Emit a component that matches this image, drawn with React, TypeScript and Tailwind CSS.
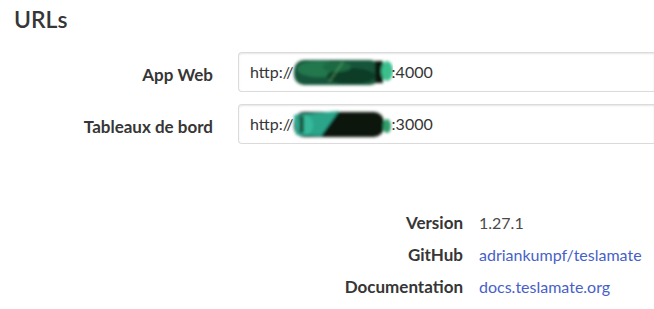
import React from "react";

const font = { fontFamily: '"Lato", "Noto Sans", sans-serif' };

// smudged-out host address
const Smudge = ({ dark }: { dark?: boolean }) => (
  <svg width="102" height="34" viewBox="0 0 102 34" className="inline-block align-middle -ml-[3px] -mr-[1px]">
    <defs>
      <filter id={dark ? "bd" : "bg"} x="-20%" y="-40%" width="140%" height="180%">
        <feGaussianBlur stdDeviation="1.8" />
      </filter>
    </defs>
    {dark ? (
      <g filter="url(#bd)">
        <rect x="3" y="5" width="90" height="25" rx="10" fill="#0c1511" />
        <path d="M3 8 L48 4 L30 29 L5 28 Z" fill="#2aa58a" />
        <ellipse cx="14" cy="18" rx="8" ry="10" fill="#36b99a" />
        <rect x="8" y="9" width="5" height="17" fill="#1f5a45" />
        <ellipse cx="96" cy="19" rx="4" ry="7" fill="#2e9d6a" />
      </g>
    ) : (
      <g filter="url(#bg)">
        <rect x="3" y="5" width="86" height="25" rx="10" fill="#17553a" />
        <ellipse cx="28" cy="14" rx="22" ry="8" fill="#22774d" />
        <ellipse cx="60" cy="21" rx="24" ry="8" fill="#0f3d27" />
        <ellipse cx="46" cy="12" rx="14" ry="5" fill="#1d6a43" />
        <path d="M38 27 L52 7" stroke="#5fae6c" strokeWidth="1" />
        <rect x="84" y="6" width="8" height="22" fill="#0b140f" />
        <ellipse cx="96" cy="16" rx="6" ry="10" fill="#3bbf8c" />
      </g>
    )}
  </svg>
);

const UrlField = ({ label, port, dark }: { label: string; port: string; dark?: boolean }) => (
  <div className="flex items-start">
    <label className="w-[213px] shrink-0 pt-[11px] text-right text-[17px] font-bold leading-6 text-[#363636]">
      {label}
    </label>
    <div className="ml-[25px] flex h-[40px] flex-1 items-center rounded-l-[4px] border border-r-0 border-[#dbdbdb] pl-[11px] text-[16px] text-[#363636] shadow-[inset_0_1px_2px_rgba(10,10,10,0.1)]">
      <span>http://</span>
      <Smudge dark={dark} />
      <span>{port}</span>
    </div>
  </div>
);

const InfoRow = ({ label, children }: { label: string; children: React.ReactNode }) => (
  <div className="flex h-[32px] items-center">
    <div className="w-[463px] shrink-0 text-right text-[17px] font-bold text-[#363636]">{label}</div>
    <div className="ml-[16px] text-[16px] text-[#4a4a4a]">{children}</div>
  </div>
);

export default function App() {
  return (
    <div className="h-[309px] w-[654px] overflow-hidden bg-white" style={font}>
      <h2 className="pl-[14px] pt-[3px] text-[23px] font-semibold leading-8 text-[#363636]">URLs</h2>
      <div className="mt-[17px] flex flex-col gap-[12px]">
        <UrlField label="App Web" port=":4000" />
        <UrlField label="Tableaux de bord" port=":3000" dark />
      </div>
      <div className="mt-[63px] flex flex-col">
        <InfoRow label="Version">1.27.1</InfoRow>
        <InfoRow label="GitHub">
          <a className="text-[#485fc7]">adriankumpf/teslamate</a>
        </InfoRow>
        <InfoRow label="Documentation">
          <a className="text-[#485fc7]">docs.teslamate.org</a>
        </InfoRow>
      </div>
    </div>
  );
}
